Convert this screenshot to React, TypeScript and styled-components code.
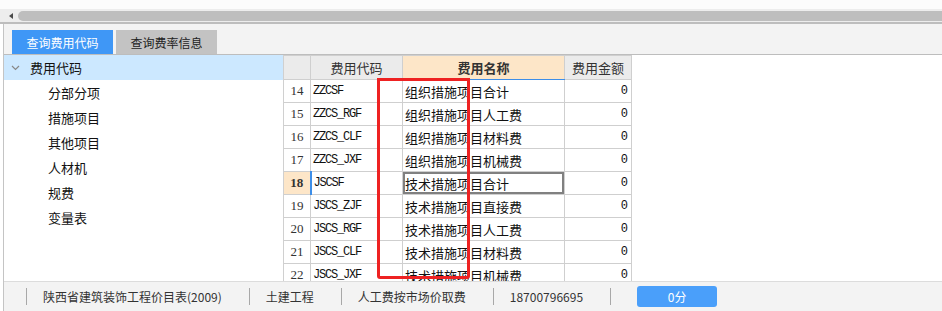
import React from 'react'
import styled, { createGlobalStyle } from 'styled-components'

const GlobalStyle = createGlobalStyle`
  html, body {
    margin: 0;
    padding: 0;
    background: #ffffff;
  }
  body {
    font-family: "Noto Sans CJK SC", "Noto Sans", sans-serif;
    color: #222;
  }
`

const Page = styled.div`
  width: 942px;
  height: 311px;
  overflow: hidden;
  display: flex;
  flex-direction: column;
  background: #fff;
`

const TopStrip = styled.div`
  height: 9px;
  background: #fcfcfc;
`

const ScrollTrack = styled.div`
  height: 13px;
  background: #ededed;
  display: flex;
  align-items: center;
  border-bottom: 2px solid #bdbdbd;
`

const ScrollArrow = styled.div`
  width: 0;
  height: 0;
  margin-left: 9px;
  border-top: 3.5px solid transparent;
  border-bottom: 3.5px solid transparent;
  border-right: 4px solid #4a4a4a;
`

const ScrollThumb = styled.div`
  flex: 1;
  height: 10px;
  margin-left: 5px;
  border-radius: 5px 0 0 5px;
  background: #bebebe;
`

const Frame = styled.div`
  flex: 1;
  display: flex;
  flex-direction: column;
  margin-left: 3px;
  border-left: 1px solid #c4c4c4;
  min-height: 0;
`

const TabBar = styled.div`
  height: 24px;
  padding: 6px 0 0 8px;
  display: flex;
  gap: 3px;
  background: #f3f3f3;
  border-bottom: 1px solid #bdbdbd;
`

const Tab = styled.div<{ $active?: boolean }>`
  width: 101px;
  height: 24px;
  display: flex;
  align-items: center;
  justify-content: center;
  font-size: 12px;
  background: ${p => (p.$active ? '#3f97f6' : '#c3c3c3')};
  color: ${p => (p.$active ? '#ffffff' : '#222')};
`

const Body = styled.div`
  height: 226px;
  display: flex;
  background: #fff;
`

const TreePanel = styled.div`
  width: 279px;
  border-right: 1px solid #d0d0d0;
  display: flex;
  flex-direction: column;
`

const TreeRow = styled.div<{ $root?: boolean }>`
  height: 25px;
  display: flex;
  align-items: center;
  gap: 10px;
  padding-left: ${p => (p.$root ? '7px' : '44px')};
  font-size: 13px;
  color: #111;
  background: ${p => (p.$root ? '#cce8ff' : 'transparent')};
`

const GridArea = styled.div`
  position: relative;
  flex: 1;
  overflow: hidden;
`

const Table = styled.table`
  border-collapse: collapse;
  table-layout: fixed;
  width: 345px;
`

const HeadCell = styled.th<{ $w: number; $active?: boolean }>`
  width: ${p => p.$w}px;
  height: 23px;
  padding: 0;
  font-size: 13px;
  font-weight: ${p => (p.$active ? 700 : 400)};
  color: #333;
  background: ${p => (p.$active ? '#fde6c8' : '#ebebeb')};
  border-right: 1px solid #cfcfcf;
  border-bottom: 1px solid ${p => (p.$active ? '#3d8ee8' : '#cfcfcf')};
  border-top: 1px solid #cfcfcf;
`

const NumCell = styled.td<{ $current?: boolean }>`
  height: 22px;
  padding: 0;
  text-align: center;
  font-family: "Liberation Serif", "DejaVu Serif", serif;
  font-size: 13px;
  font-weight: ${p => (p.$current ? 700 : 400)};
  color: #333;
  background: ${p => (p.$current ? '#fde6c8' : '#ffffff')};
  border-bottom: 1px solid #cfcfcf;
  border-right: ${p => (p.$current ? '2px solid #3d8ee8' : '1px solid #cfcfcf')};
`

const CodeCell = styled.td`
  padding: 0 0 0 2px;
  font-family: "Liberation Mono", "DejaVu Sans Mono", monospace;
  font-size: 12px;
  letter-spacing: -1.2px;
  color: #111;
  border-bottom: 1px solid #cfcfcf;
  border-right: 1px solid #cfcfcf;
  white-space: nowrap;
`

const NameCell = styled.td<{ $selected?: boolean }>`
  padding: 0 0 0 2px;
  font-size: 13px;
  color: #111;
  white-space: nowrap;
  overflow: hidden;
  border-bottom: 1px solid #cfcfcf;
  border-right: 1px solid #cfcfcf;
  box-shadow: ${p => (p.$selected ? 'inset 0 0 0 2px #808080' : 'none')};
`

const AmountCell = styled.td`
  padding: 0 3px 0 0;
  text-align: right;
  font-family: "Liberation Mono", "DejaVu Sans Mono", monospace;
  font-size: 12px;
  color: #111;
  border-bottom: 1px solid #cfcfcf;
  border-right: 1px solid #cfcfcf;
`

const Annotation = styled.div`
  position: absolute;
  left: 93px;
  top: 23px;
  width: 87px;
  height: 195px;
  border: 3px solid #ee2222;
  border-radius: 0 0 3px 3px;
  pointer-events: none;
`

const StatusBar = styled.div`
  flex: 1;
  display: flex;
  align-items: center;
  padding-left: 22px;
  background: #f3f3f3;
  border-top: 1px solid #dcdcdc;
`

const StatusItem = styled.div<{ $last?: boolean }>`
  height: 17px;
  display: flex;
  align-items: center;
  padding: ${p => (p.$last ? '0 0 0 26px' : '0 27px 0 16px')};
  border-left: 1px solid #a8a8a8;
  font-size: 12px;
  color: #333;
  white-space: nowrap;
`

const ScoreButton = styled.div`
  width: 80px;
  height: 21px;
  display: flex;
  align-items: center;
  justify-content: center;
  border-radius: 3px;
  background: #4a9ffa;
  color: #fff;
  font-size: 12px;
`

const Chevron = () => (
  <svg width="9" height="6" viewBox="0 0 9 6">
    <path d="M1 1 L4.5 4.5 L8 1" fill="none" stroke="#888" strokeWidth="1.2" />
  </svg>
)

const treeItems = ['分部分项', '措施项目', '其他项目', '人材机', '规费', '变量表']

const rows = [
  { no: 14, code: 'ZZCSF', name: '组织措施项目合计' },
  { no: 15, code: 'ZZCS_RGF', name: '组织措施项目人工费' },
  { no: 16, code: 'ZZCS_CLF', name: '组织措施项目材料费' },
  { no: 17, code: 'ZZCS_JXF', name: '组织措施项目机械费' },
  { no: 18, code: 'JSCSF', name: '技术措施项目合计' },
  { no: 19, code: 'JSCS_ZJF', name: '技术措施项目直接费' },
  { no: 20, code: 'JSCS_RGF', name: '技术措施项目人工费' },
  { no: 21, code: 'JSCS_CLF', name: '技术措施项目材料费' },
  { no: 22, code: 'JSCS_JXF', name: '技术措施项目机械费' },
]

export default function App() {
  return (
    <Page>
      <GlobalStyle />
      <TopStrip />
      <ScrollTrack>
        <ScrollArrow />
        <ScrollThumb />
      </ScrollTrack>
      <Frame>
        <TabBar>
          <Tab $active>查询费用代码</Tab>
          <Tab>查询费率信息</Tab>
        </TabBar>
        <Body>
          <TreePanel>
            <TreeRow $root>
              <Chevron />
              费用代码
            </TreeRow>
            {treeItems.map(t => (
              <TreeRow key={t}>{t}</TreeRow>
            ))}
          </TreePanel>
          <GridArea>
            <Table>
              <thead>
                <tr>
                  <HeadCell $w={26} />
                  <HeadCell $w={91}>费用代码</HeadCell>
                  <HeadCell $w={161} $active>费用名称</HeadCell>
                  <HeadCell $w={66}>费用金额</HeadCell>
                </tr>
              </thead>
              <tbody>
                {rows.map(r => (
                  <tr key={r.no}>
                    <NumCell $current={r.no === 18}>{r.no}</NumCell>
                    <CodeCell>{r.code}</CodeCell>
                    <NameCell $selected={r.no === 18}>{r.name}</NameCell>
                    <AmountCell>0</AmountCell>
                  </tr>
                ))}
              </tbody>
            </Table>
            <Annotation />
          </GridArea>
        </Body>
        <StatusBar>
          <StatusItem>陕西省建筑装饰工程价目表(2009)</StatusItem>
          <StatusItem>土建工程</StatusItem>
          <StatusItem>人工费按市场价取费</StatusItem>
          <StatusItem>18700796695</StatusItem>
          <StatusItem $last>
            <ScoreButton>0分</ScoreButton>
          </StatusItem>
        </StatusBar>
      </Frame>
    </Page>
  )
}
